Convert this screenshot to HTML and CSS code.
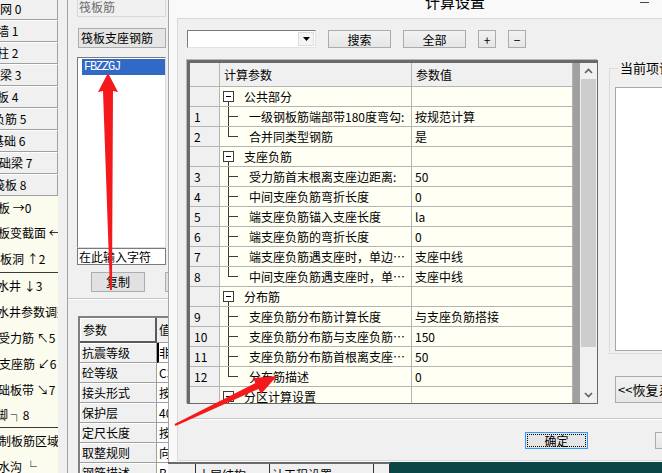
FILE: index.html
```html
<!DOCTYPE html>
<html lang="zh-CN">
<head>
<meta charset="utf-8">
<title>计算设置</title>
<link rel="stylesheet" href="styles.css">
</head>
<body>
<div class="app">
  <aside class="tools">
    <div class="tbtns">
      <div class="tbtn">网 0</div>
      <div class="tbtn cut3">墙 1</div>
      <div class="tbtn cut3">柱 2</div>
      <div class="tbtn">梁 3</div>
      <div class="tbtn cut3">板 4</div>
      <div class="tbtn cut7">负筋 5</div>
      <div class="tbtn cut8">基础 6</div>
      <div class="tbtn cut1">础梁 7</div>
      <div class="tbtn cut7">筏板 8</div>
    </div>
    <div class="cmds">
      <div class="cmd first cut14">筏板 →0</div>
      <div class="cmd cut14">筏板变截面 ←1</div>
      <div class="cmd cut12">筏板洞 ↑2</div>
      <div class="cmd-sep"></div>
      <div class="cmd cut15">集水井 ↓3</div>
      <div class="cmd cut15">集水井参数调整</div>
      <div class="cmd cut14">板受力筋 ↖5</div>
      <div class="cmd cut1">支座筋 ↙6</div>
      <div class="cmd cut14">基础板带 ↘7</div>
      <div class="cmd short cut4">脚 ┐8</div>
      <div class="cmd-sep"></div>
      <div class="cmd cut13">绘制板筋区域</div>
      <div class="cmd cut14">排水沟 └</div>
    </div>
  </aside>

  <section class="side">
    <div class="ro">筏板筋</div>
    <div class="pick">筏板支座钢筋</div>
    <div class="list"><div class="sel">FBZZGJ</div></div>
    <div class="inp">在此输入字符</div>
    <div class="acts"><div class="pbtn">复制</div><div class="pbtn">删除</div></div>
    <div class="sep"></div>
    <div class="props">
      <div class="prow phd"><div class="pk">参数</div><div class="pv">值</div></div>
      <div class="prow"><div class="pk">抗震等级</div><div class="pv focus">非抗震</div></div>
      <div class="prow"><div class="pk">砼等级</div><div class="pv">C30</div></div>
      <div class="prow"><div class="pk">接头形式</div><div class="pv">按</div></div>
      <div class="prow"><div class="pk">保护层</div><div class="pv">40</div></div>
      <div class="prow"><div class="pk">定尺长度</div><div class="pv">按</div></div>
      <div class="prow"><div class="pk">取整规则</div><div class="pv">向上</div></div>
      <div class="prow"><div class="pk">钢筋描述</div><div class="pv">B</div></div>
    </div>
  </section>

  <section class="stage">
    <div class="strip">
      <div class="tabs"><span class="tab t1">土层结构</span><span class="tab t2">计工程设置</span><span class="tab t3"></span></div>
      <div class="teal"></div>
    </div>
  </section>
</div>

<div class="dlg">
  <div class="ttl"><span class="ttl-t">计算设置</span><span class="min"></span></div>
  <div class="panel">
    <div class="tb">
      <div class="combo"><span class="dd"><svg width="7" height="4" viewBox="0 0 7 4"><polygon points="0,0 7,0 3.5,4" fill="#000"/></svg></span></div>
      <div class="btn w63">搜索</div>
      <div class="btn w63">全部</div>
      <div class="btn sq">+</div>
      <div class="btn sq">−</div>
    </div>
    <div class="body">
      <div class="grid">
        <div class="gtab">
          <div class="row hd"><div class="c1"></div><div class="c2">计算参数</div><div class="c3">参数值</div></div>
          <div class="row"><div class="c1"></div><div class="c2 grp"><span class="tog"></span>公共部分</div><div class="c3"></div></div>
          <div class="row"><div class="c1">1</div><div class="c2 leaf">一级钢板筋端部带180度弯勾:</div><div class="c3">按规范计算</div></div>
          <div class="row"><div class="c1">2</div><div class="c2 leaf last">合并同类型钢筋</div><div class="c3">是</div></div>
          <div class="row"><div class="c1"></div><div class="c2 grp"><span class="tog"></span>支座负筋</div><div class="c3"></div></div>
          <div class="row"><div class="c1">3</div><div class="c2 leaf">受力筋首末根离支座边距离:</div><div class="c3">50</div></div>
          <div class="row"><div class="c1">4</div><div class="c2 leaf">中间支座负筋弯折长度</div><div class="c3">0</div></div>
          <div class="row"><div class="c1">5</div><div class="c2 leaf">端支座负筋锚入支座长度</div><div class="c3">la</div></div>
          <div class="row"><div class="c1">6</div><div class="c2 leaf">端支座负筋的弯折长度</div><div class="c3">0</div></div>
          <div class="row"><div class="c1">7</div><div class="c2 leaf">端支座负筋遇支座时，单边标注支座负筋尺寸位置</div><div class="c3">支座中线</div></div>
          <div class="row"><div class="c1">8</div><div class="c2 leaf last">中间支座负筋遇支座时，单边标注支座负筋尺寸位置</div><div class="c3">支座中线</div></div>
          <div class="row"><div class="c1"></div><div class="c2 grp"><span class="tog"></span>分布筋</div><div class="c3"></div></div>
          <div class="row"><div class="c1">9</div><div class="c2 leaf">支座负筋分布筋计算长度</div><div class="c3">与支座负筋搭接</div></div>
          <div class="row"><div class="c1">10</div><div class="c2 leaf">支座负筋分布筋与支座负筋的搭接长度</div><div class="c3">150</div></div>
          <div class="row"><div class="c1">11</div><div class="c2 leaf">支座负筋分布筋首根离支座边距离</div><div class="c3">50</div></div>
          <div class="row"><div class="c1">12</div><div class="c2 leaf last">分布筋描述</div><div class="c3">0</div></div>
          <div class="row"><div class="c1"></div><div class="c2 grp"><span class="tog"></span>分区计算设置</div><div class="c3"></div></div>
        </div>
        <div class="fill"></div>
        <div class="sb">
          <div class="sbu"><svg width="9" height="6" viewBox="0 0 9 6"><polyline points="1,5 4.5,1.5 8,5" fill="none" stroke="#606060" stroke-width="1.6"/></svg></div>
          <div class="thumb"></div>
          <div class="track"></div>
          <div class="sbd"><svg width="9" height="6" viewBox="0 0 9 6"><polyline points="1,1 4.5,4.5 8,1" fill="none" stroke="#606060" stroke-width="1.6"/></svg></div>
        </div>
      </div>
      <div class="rc">
        <div class="group">
          <span class="legend">当前项详细说明</span>
          <div class="detail"></div>
        </div>
        <div class="btn restore">&lt;&lt;恢复系统默认值</div>
      </div>
    </div>
    <div class="foot">
      <div class="btn ok"><span>确定</span></div>
      <div class="btn cancel">取消</div>
    </div>
  </div>
</div>

<svg class="arrows" width="662" height="473" viewBox="0 0 662 473">
  <polygon points="108,73 118,92 113,91 112,290 110,290 103,91 98,92" fill="#f41a1c"/>
  <polygon points="277,376 261,394 258.5,389 175.5,426 174.5,424 255.5,383 253,378" fill="#f41a1c"/>
</svg>
</body>
</html>
```

FILE: styles.css
```css
* { box-sizing: border-box; margin: 0; padding: 0; }
html, body { width: 662px; height: 473px; overflow: hidden; }
body {
  font-family: "Noto Sans CJK SC", "Noto Sans", sans-serif;
  font-size: 12px;
  color: #000;
  background: #f0f0f0;
  position: relative;
}

.app { display: flex; height: 473px; }

/* left tool column */
.tools {
  width: 68px;
  flex: none;
  border-right: 1px solid #a0a0a0;
  background: #f0f0f0;
  overflow: hidden;
}
.tbtns { margin-top: -2px; width: 58px; }
.tbtn {
  height: 22px;
  line-height: 20px;
  border-top: 1px solid #fff;
  border-bottom: 1px solid #a0a0a0;
  border-right: 1px solid #a0a0a0;
  white-space: nowrap;
  overflow: hidden;
}
.cmds { width: 58px; height: 300px; background: #fbfbee; }
.cmd { height: 26px; line-height: 26px; white-space: nowrap; overflow: hidden; }
.cmd.first { height: 24px; line-height: 24px; }
.cmd.short { height: 24px; line-height: 24px; }
.cmd-sep { height: 1px; background: #3c3c3c; }
.cut1 { text-indent: -1px; }
.cut3 { text-indent: -3px; }
.cut4 { text-indent: -4px; }
.cut7 { text-indent: -7px; }
.cut8 { text-indent: -8px; }
.cut12 { text-indent: -12px; }
.cut13 { text-indent: -13px; }
.cut14 { text-indent: -14px; }
.cut15 { text-indent: -15px; }

/* middle panel */
.side {
  width: 100px;
  flex: none;
  padding-left: 9px;
  background: #f0f0f0;
  overflow: hidden;
}
.ro {
  margin-top: -3px;
  width: 89px;
  height: 20px;
  border: 1px solid #d9d9d9;
  color: #6d6d6d;
  line-height: 18px;
  padding-left: 1px;
}
.pick {
  margin: 11px 0 0 1px;
  width: 88px;
  height: 20px;
  border: 1px solid #adadad;
  background: #e5e5e5;
  line-height: 18px;
  padding-left: 2px;
  white-space: nowrap;
}
.list {
  margin-top: 9px;
  width: 89px;
  height: 191px;
  background: #fff;
  border: 1px solid;
  border-color: #7a7a7a #dadada #dadada #7a7a7a;
  padding: 1px 0 0 4px;
}
.sel {
  height: 16px;
  background: #3169c6;
  color: #fff;
  font-family: "Liberation Mono", monospace;
  font-size: 12px;
  letter-spacing: -1.2px;
  line-height: 16px;
  padding-left: 2px;
}
.inp {
  width: 89px;
  height: 17px;
  background: #fff;
  border: 1px solid #7a7a7a;
  line-height: 15px;
  padding-left: 1px;
  white-space: nowrap;
  overflow: hidden;
}
.acts { display: flex; gap: 20px; margin-top: 7px; padding-left: 14px; }
.pbtn {
  width: 54px;
  height: 20px;
  flex: none;
  border: 1px solid #adadad;
  background: #e1e1e1;
  text-align: center;
  line-height: 18px;
}
.sep {
  margin: 6px 0 0 -9px;
  height: 2px;
  border-top: 1px solid #c4c4c4;
  border-bottom: 1px solid #fff;
}
.props {
  margin: 16px 0 0 1px;
  width: 140px;
  border-top: 2px solid #808080;
  border-left: 2px solid #808080;
}
.prow { display: flex; height: 20px; }
.prow.phd { height: 25px; }
.pk {
  width: 77px;
  flex: none;
  background: #f0f0f0;
  border-bottom: 1px solid #a0a0a0;
  border-right: 1px solid #a0a0a0;
  box-shadow: inset 1px 1px #fff;
  padding-left: 2px;
  line-height: 19px;
  white-space: nowrap;
}
.phd .pk {
  border-right: 2px solid #5a5a5a;
  border-bottom: 2px solid #5a5a5a;
  line-height: 23px;
  padding-left: 3px;
}
.pv {
  flex: 1;
  background: #fff;
  border-bottom: 1px solid #a0a0a0;
  padding-left: 2px;
  line-height: 19px;
  white-space: nowrap;
  overflow: hidden;
}
.phd .pv { background: #f0f0f0; line-height: 23px; }
.pv.focus { border-left: 2px solid #000; padding-left: 0; }

/* area behind dialog */
.stage { flex: 1; display: flex; flex-direction: column; justify-content: flex-end; }
.strip { height: 11px; display: flex; }
.tabs {
  width: 222px;
  display: flex;
  background: #f0f0f0;
  border-top: 2px solid #6a6a6a;
  overflow: hidden;
}
.tab {
  line-height: 16px;
  padding-top: 3px;
  white-space: nowrap;
  border-left: 1px solid #333;
  padding-left: 2px;
  overflow: hidden;
}
.t1 { margin-left: 27px; width: 74px; }
.t2 { width: 104px; }
.t3 { width: 17px; border-right: 1px solid #333; }
.teal { flex: 1; background: #0c4545; }

/* dialog window */
.dlg {
  position: absolute;
  left: 168px;
  top: 0;
  width: 520px;
  height: 462px;
  background: #f9f9f9;
  border-left: 1px solid #a6a6a6;
  padding: 0 0 1px 8px;
  display: flex;
  flex-direction: column;
}
.ttl { height: 18px; flex: none; display: flex; padding-left: 248px; }
.ttl-t { font-size: 15px; line-height: 18px; margin-top: -7px; white-space: nowrap; }
.min { width: 9px; height: 1px; background: #444; margin: 2px 0 0 155px; }
.panel {
  flex: 1;
  border: 1px solid #d9d9d9;
  border-right: none;
  background: #f0f0f0;
  padding-left: 9px;
  display: flex;
  flex-direction: column;
}
.tb { display: flex; gap: 12px; margin-top: 11px; height: 18px; }
.combo {
  width: 129px;
  height: 18px;
  background: #fff;
  border: 1px solid;
  border-color: #7a7a7a #e3e3e3 #e3e3e3 #7a7a7a;
  display: flex;
  justify-content: flex-end;
  padding: 1px;
}
.dd {
  width: 16px;
  display: flex;
  align-items: center;
  justify-content: center;
  background: #f4f4f4;
  border: 1px solid #dcdcdc;
}
.btn {
  height: 18px;
  border: 1px solid #acacac;
  background: linear-gradient(#f2f2f2, #e6e6e6);
  display: flex;
  align-items: center;
  justify-content: center;
  flex: none;
  white-space: nowrap;
}
.btn.w63 { width: 63px; }
.btn.sq { width: 18px; }

.body { display: flex; gap: 11px; margin-top: 12px; align-items: flex-start; }
.grid {
  width: 411px;
  height: 344px;
  flex: none;
  display: flex;
  border-top: 3px solid #6a6a6a;
  border-left: 3px solid #6a6a6a;
  border-right: 1px solid #6a6a6a;
  border-bottom: 1px solid #6a6a6a;
  box-shadow: -1px -1px 0 0 #b8b8b8;
}
.gtab { width: 383px; overflow: hidden; background: #fffff4; }
.row { display: flex; height: 20px; }
.row.hd { height: 24px; }
.row > div {
  border-right: 1px solid #b4b4b4;
  border-bottom: 1px solid #b4b4b4;
  line-height: 19px;
  white-space: nowrap;
  overflow: hidden;
  flex: none;
}
.row.hd > div { line-height: 23px; background: #f0f0f0; }
.c1 { width: 30px; background: #f0f0f0; padding-left: 4px; }
.c2 { width: 192px; padding-left: 4px; text-overflow: ellipsis; }
.c3 { width: 161px; padding-left: 3px; }
.row.hd .c3 { padding-left: 4px; }
.c2.grp {
  padding-left: 3px;
  display: flex;
  align-items: center;
  background: linear-gradient(#3c3c3c, #3c3c3c) 8px 15px / 1px 5px no-repeat;
}
.tog {
  width: 11px;
  height: 11px;
  flex: none;
  margin-right: 10px;
  border: 1px solid #3c3c3c;
  background: linear-gradient(#000, #000) center / 5px 1px no-repeat, #fff;
}
.c2.leaf {
  padding-left: 29px;
  padding-right: 1px;
  background:
    linear-gradient(#3c3c3c, #3c3c3c) 8px 0 / 1px 100% no-repeat,
    linear-gradient(#3c3c3c, #3c3c3c) 8px 9px / 10px 1px no-repeat;
}
.c2.leaf.last {
  background:
    linear-gradient(#3c3c3c, #3c3c3c) 8px 0 / 1px 10px no-repeat,
    linear-gradient(#3c3c3c, #3c3c3c) 8px 9px / 10px 1px no-repeat;
}
.fill { width: 7px; background: #a0a0a0; flex: none; }
.sb { width: 17px; flex: none; background: #f0f0f0; display: flex; flex-direction: column; }
.sbu, .sbd { height: 16px; display: flex; align-items: center; justify-content: center; }
.thumb { height: 268px; background: #cdcdcd; margin: 0 1px; }
.track { flex: 1; }

.rc { width: 80px; flex: none; }
.group {
  margin-top: 8px;
  height: 286px;
  border: 1px solid #dcdcdc;
  border-right: none;
  padding-left: 5px;
}
.legend {
  display: inline-block;
  margin: -9px 0 0 3px;
  padding: 0 2px;
  background: #f0f0f0;
  font-size: 13px;
  line-height: 15px;
  white-space: nowrap;
  vertical-align: top;
}
.detail { margin-top: 1px; height: 264px; background: #fff; border: 1px solid #a8a8a8; border-right: none; }
.btn.restore {
  margin: 22px 0 0 6px;
  height: 27px;
  justify-content: flex-start;
  padding-left: 2px;
  font-size: 13px;
  overflow: hidden;
  border-right: none;
}

.foot {
  margin-top: 14px;
  flex: 1;
  border-top: 1px solid #c8c8c8;
  box-shadow: inset 0 1px #fff;
  display: flex;
  gap: 67px;
  padding: 13px 0 0 338px;
  align-items: flex-start;
}
.btn.ok {
  width: 63px;
  height: 17px;
  border: 1px solid #3399ff;
  background: #e5e5e5;
  padding: 2px;
}
.btn.ok span {
  display: flex;
  align-items: center;
  justify-content: center;
  width: 100%;
  height: 100%;
  outline: 1px dotted #000;
  line-height: 11px;
}
.btn.cancel { width: 63px; height: 17px; }

.arrows { position: absolute; left: 0; top: 0; pointer-events: none; }
```
